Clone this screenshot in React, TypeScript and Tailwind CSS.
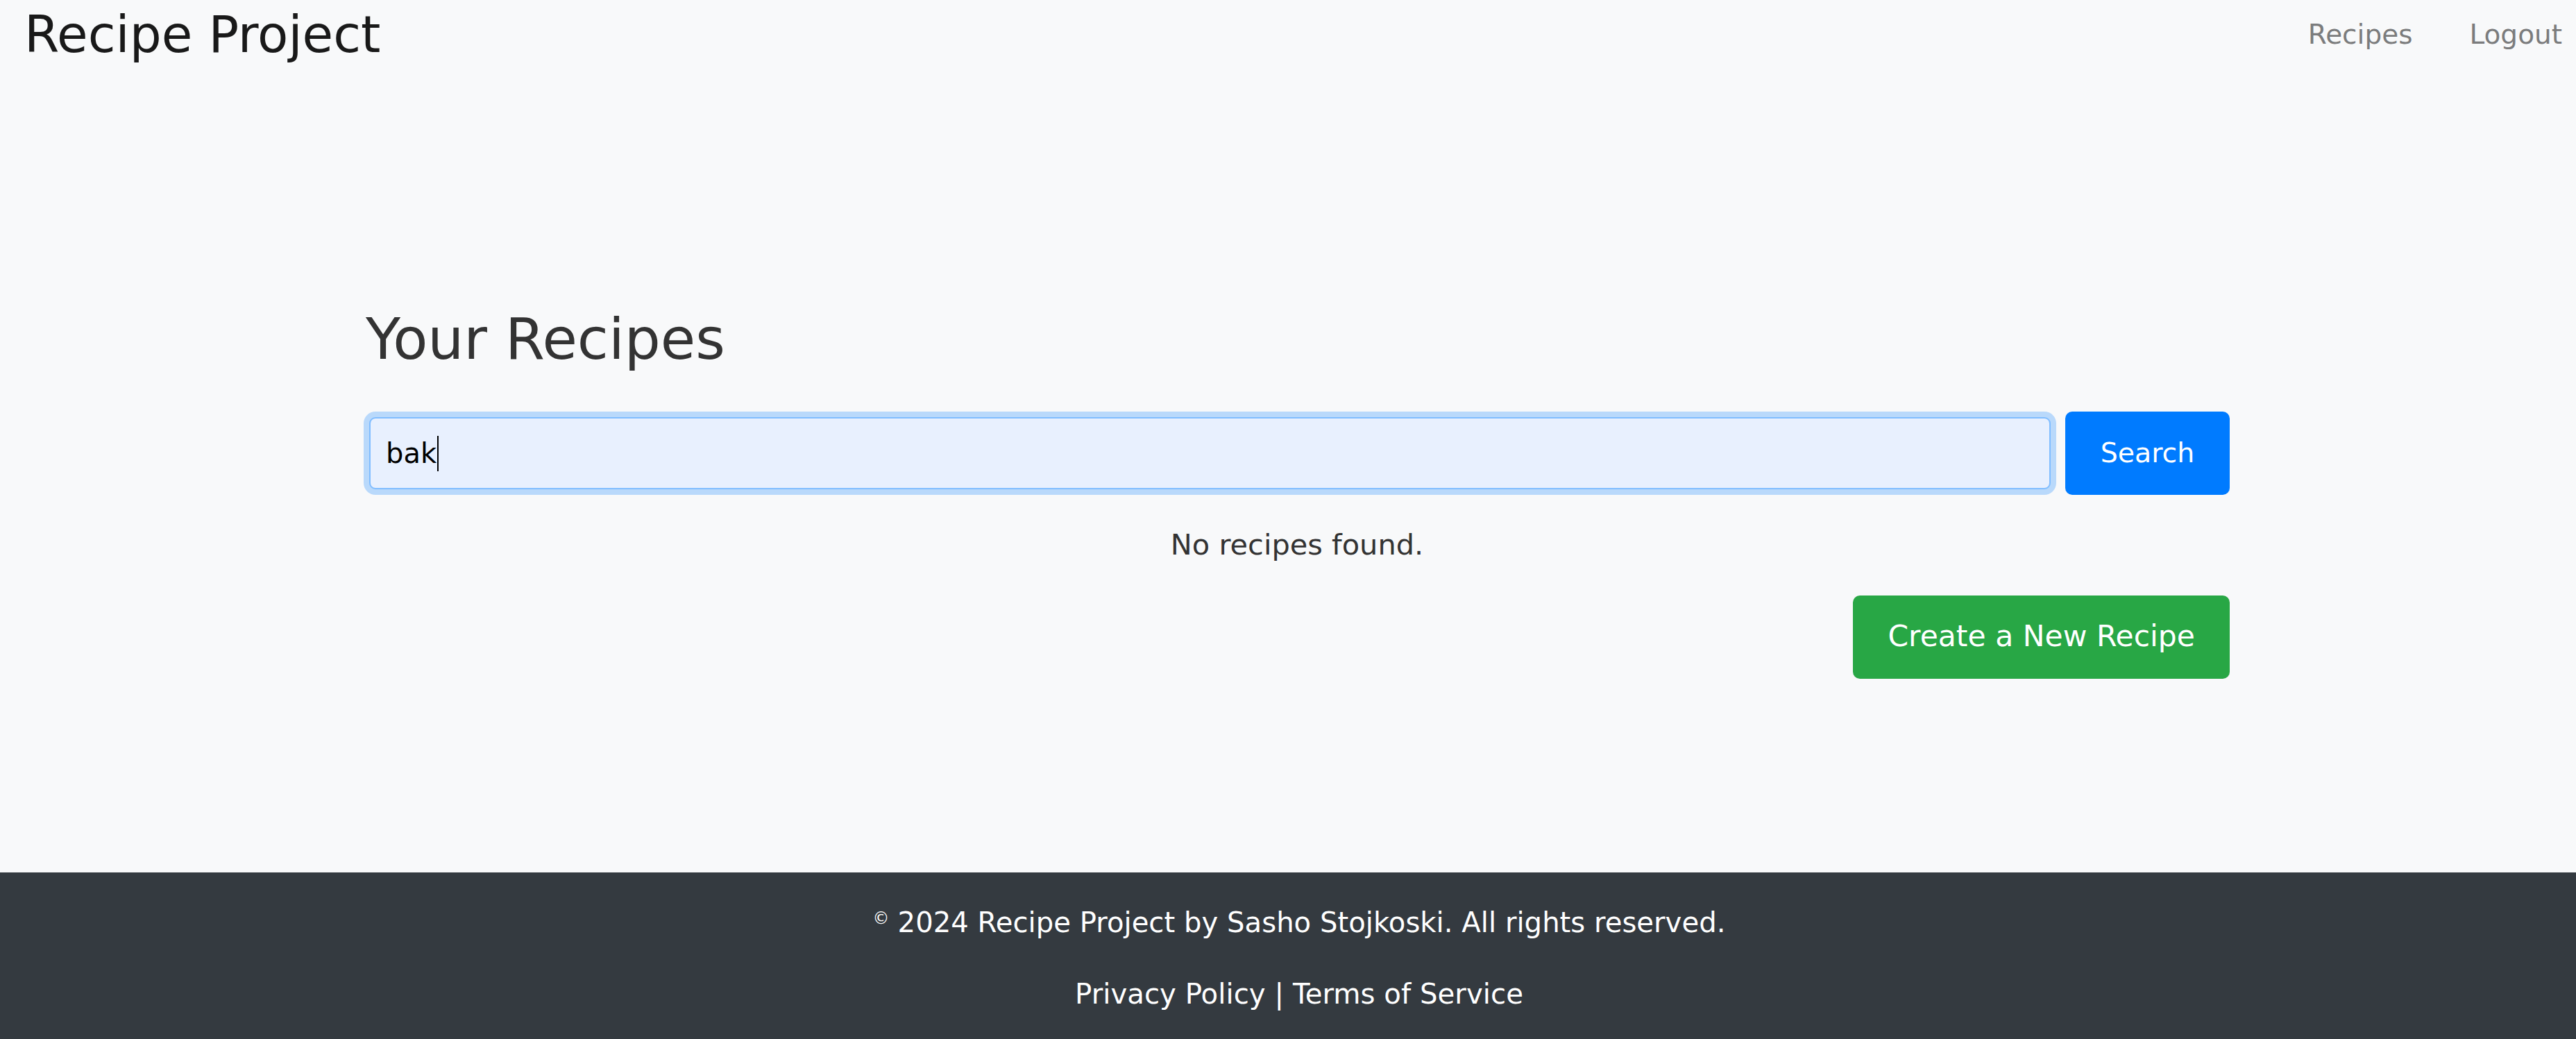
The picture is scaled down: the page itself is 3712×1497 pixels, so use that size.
import React from "react";

export default function App() {
  return (
    <div className="min-h-screen flex flex-col bg-[#f8f9fa] font-['DejaVu_Sans',sans-serif]">
      <nav className="h-[100px] flex items-start justify-between pl-[35px] pr-[20px]">
        <div className="pt-[14px] text-[72.5px] leading-none text-[#191919]">Recipe Project</div>
        <div className="flex items-start gap-[82px] pt-[30px] text-[39px] leading-none text-[#7b7c7d]">
          <span>Recipes</span>
          <span>Logout</span>
        </div>
      </nav>

      <main className="flex-1">
        <div className="ml-[525px] w-[2688px] pt-[348px]">
          <h2 className="pl-[2px] text-[82px] leading-none text-[#333333]">Your Recipes</h2>

          <div className="mt-[63px] flex h-[120px] items-center">
            <div className="ml-[7px] mr-[21px] flex h-[104px] flex-1 items-center rounded-[9px] border-2 border-[#80bdff] bg-[#e8f0fe] pl-[22px] shadow-[0_0_0_8px_#b9d9fb]">
              <span className="text-[40px] leading-none text-black">bak</span>
              <span className="ml-[1px] h-[51px] w-[2px] bg-black" />
            </div>
            <button className="h-[120px] w-[237px] rounded-[10px] bg-[#007bff] text-[39.5px] leading-none text-white">
              Search
            </button>
          </div>

          <p className="mt-[51px] text-center text-[41.5px] leading-none text-[#333333]">No recipes found.</p>

          <div className="mt-[52px] flex justify-end">
            <button className="h-[120px] rounded-[10px] bg-[#28a745] px-[50px] text-[42.5px] leading-none text-white">
              Create a New Recipe
            </button>
          </div>
        </div>
      </main>

      <footer className="h-[240px] bg-[#343a40] pl-[32px] pt-[52px] text-white">
        <div className="flex items-start justify-center text-[40.2px] leading-none">
          <span className="mr-[12px] mt-[2px] text-[24px] leading-none">©</span>
          <span>2024 Recipe Project by Sasho Stojkoski. All rights reserved.</span>
        </div>
        <div className="mt-[64px] text-center text-[40.3px] leading-none">
          <span>Privacy Policy</span>
          <span> | </span>
          <span>Terms of Service</span>
        </div>
      </footer>
    </div>
  );
}
